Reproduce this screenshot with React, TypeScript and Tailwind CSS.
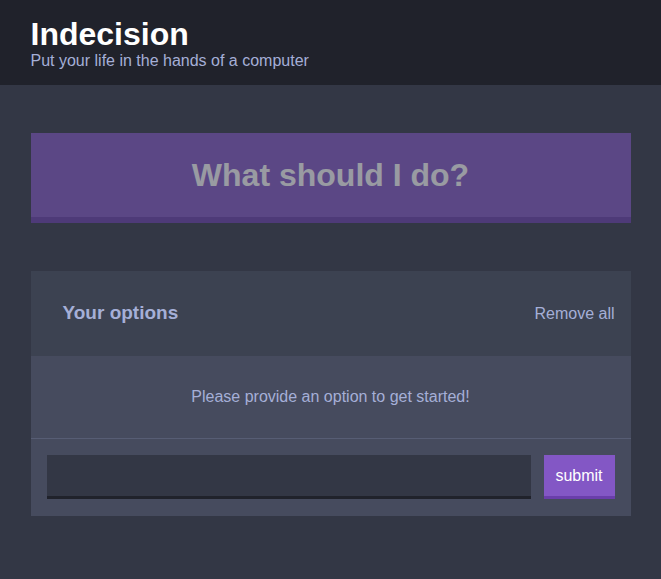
export default function App() {
  return (
    <div className="min-h-[579px] bg-[#333745] font-['Liberation_Sans',Arial,sans-serif]">
      {/* Header */}
      <header className="bg-[#20222b] pt-4 pb-[15px]">
        <div className="max-w-[600px] mx-auto">
          <h1 className="text-[32px] leading-[36px] font-bold text-white">Indecision</h1>
          <h2 className="text-base leading-[18px] text-[#a5afd7]">Put your life in the hands of a computer</h2>
        </div>
      </header>

      <main className="max-w-[600px] mx-auto pt-12">
        <button
          disabled
          className="w-full bg-[#8357c5] border-b-[6px] border-[#6a3eab] text-white text-[32px] leading-[36px] font-bold py-6 opacity-50 mb-12"
        >
          What should I do?
        </button>

        <div className="bg-[#464b5e]">
          <div className="bg-[#3c4251] h-[85px] flex items-center justify-between pl-8 pr-4">
            <h3 className="text-[19px] font-bold text-[#a5afd7]">Your options</h3>
            <button className="text-base text-[#a5afd7]">Remove all</button>
          </div>

          <p className="py-8 text-center text-base leading-[18px] text-[#a5afd7] border-b border-[#575d74]">
            Please provide an option to get started!
          </p>

          <form className="flex gap-[13px] px-4 pt-4 pb-[17px]" onSubmit={(e) => e.preventDefault()}>
            <input
              type="text"
              className="flex-1 h-[44px] bg-[#333745] border-b-[3px] border-[#20222b] outline-none text-white px-3"
            />
            <button className="w-[71px] h-[44px] bg-[#8357c5] border-b-[3px] border-[#6a3eab] text-white text-base">
              submit
            </button>
          </form>
        </div>
      </main>
    </div>
  );
}
